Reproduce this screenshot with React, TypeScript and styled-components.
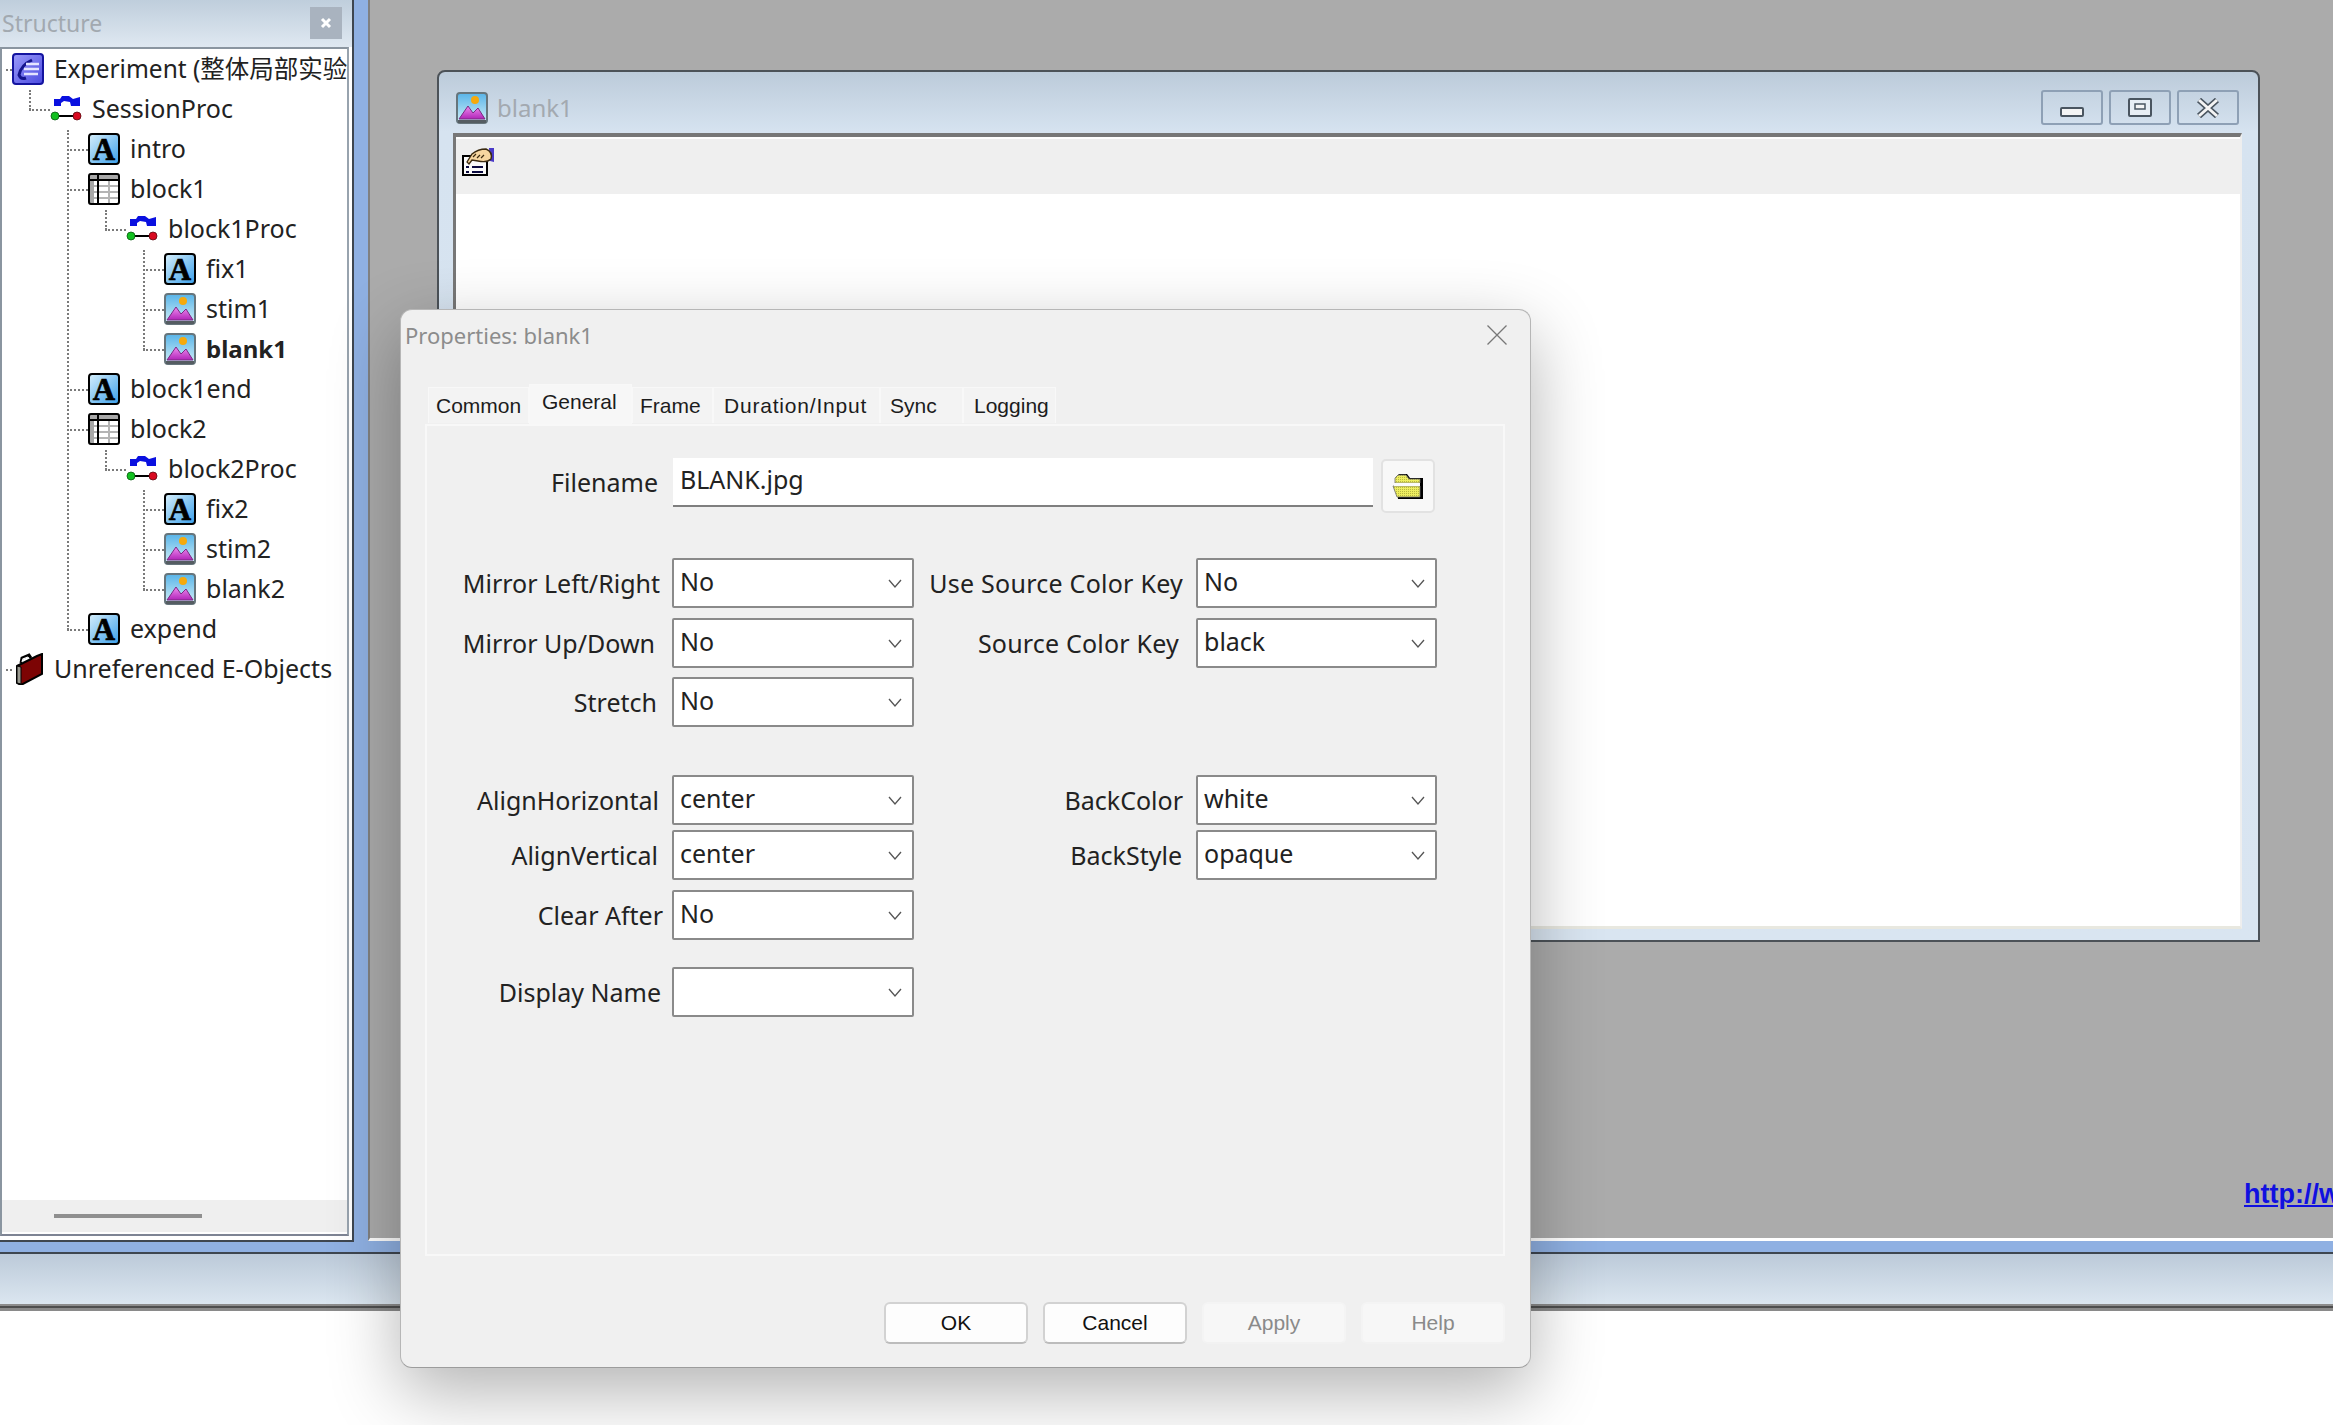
import React from "react";
import styled, { createGlobalStyle } from "styled-components";

const UI_FONT = `"Noto Sans", "Noto Sans CJK SC", sans-serif`;
const DIALOG_FONT = `"Liberation Sans", sans-serif`;

const GlobalStyle = createGlobalStyle`
  html, body {
    margin: 0;
    padding: 0;
    background: #fff;
    overflow: hidden;
  }
  * { box-sizing: border-box; }
`;

/* ---------- icons ---------- */

const TextIcon = () => (
  <svg width="32" height="32" viewBox="0 0 32 32" overflow="visible">
    <defs>
      <linearGradient id="textBg" x1="0" y1="0" x2="1" y2="1">
        <stop offset="0" stopColor="#d8f0fc" />
        <stop offset="1" stopColor="#3a9fea" />
      </linearGradient>
    </defs>
    <rect x="1" y="1" width="30" height="30" rx="3" fill="url(#textBg)" stroke="#000" strokeWidth="2" />
    <text
      x="16"
      y="26.5"
      textAnchor="middle"
      fontFamily="Liberation Serif"
      fontWeight="700"
      fontSize="31"
      fill="#000"
      stroke="#000"
      strokeWidth="0.7"
    >
      A
    </text>
  </svg>
);

const ImageIcon = () => (
  <svg width="32" height="32" viewBox="0 0 32 32">
    <defs>
      <linearGradient id="skyBg" x1="0" y1="0" x2="0" y2="1">
        <stop offset="0" stopColor="#58b4e8" />
        <stop offset="1" stopColor="#d4f0f8" />
      </linearGradient>
      <linearGradient id="hillBg" x1="0" y1="0" x2="0" y2="1">
        <stop offset="0" stopColor="#f08cf0" />
        <stop offset="1" stopColor="#b024b8" />
      </linearGradient>
    </defs>
    <rect x="1" y="1" width="30" height="30" rx="3" fill="url(#skyBg)" stroke="#66757c" strokeWidth="2" />
    <circle cx="19" cy="8" r="4" fill="#f6a90c" />
    <polygon points="3,27 12,14 17,21 22,16 29,27" fill="url(#hillBg)" stroke="#7a2a80" strokeWidth="1" />
    <rect x="2" y="28" width="28" height="3" fill="#555d62" />
  </svg>
);

const ProcIcon = () => (
  <svg width="32" height="32" viewBox="0 0 32 32">
    <polygon
      points="4,13 4,6 10,6 12,3 19,3 23,6 30,4 30,13 21,13 20,9 14,8 11,10 11,13"
      fill="#0a10e0"
    />
    <line x1="5" y1="23" x2="27" y2="23" stroke="#000" strokeWidth="2" />
    <circle cx="5" cy="23" r="4" fill="#12c020" stroke="#0a5a10" strokeWidth="0.8" />
    <circle cx="27" cy="23" r="4" fill="#d80a20" stroke="#5a0a10" strokeWidth="0.8" />
  </svg>
);

const ListIcon = () => (
  <svg width="32" height="32" viewBox="0 0 32 32">
    <rect x="1" y="1" width="30" height="30" rx="2" fill="#fff" />
    <rect x="1" y="1" width="30" height="6" fill="#a8a8a8" />
    <rect x="1" y="1" width="5" height="30" fill="#a8a8a8" />
    <path d="M6 13 H31 M6 19 H31 M6 25 H31 M21 7 V31" stroke="#b4b4b4" strokeWidth="2" />
    <path d="M10 2 V30 M1 7 H31" stroke="#000" strokeWidth="2" />
    <rect x="1" y="1" width="30" height="30" rx="2" fill="none" stroke="#000" strokeWidth="2" />
  </svg>
);

const ExperimentIcon = () => (
  <svg width="32" height="32" viewBox="0 0 32 32">
    <defs>
      <linearGradient id="expBg" x1="0" y1="0" x2="1" y2="1">
        <stop offset="0" stopColor="#9c9cfa" />
        <stop offset="1" stopColor="#4a4ae0" />
      </linearGradient>
    </defs>
    <rect x="1" y="1" width="30" height="30" rx="3" fill="url(#expBg)" stroke="#1414a0" strokeWidth="2" />
    <path d="M20 7 Q9 12 7 22 Q9 27 14 25" fill="none" stroke="#14148c" strokeWidth="3" />
    <path d="M14 11 H27 M12 16 H27 M12 21 H26" stroke="#e4e4ff" strokeWidth="2.4" />
  </svg>
);

const CaseIcon = () => (
  <svg width="32" height="32" viewBox="0 0 32 32">
    <polygon points="5,13 25,3 30,1 30,21 9,32 5,30" fill="#7c0404" stroke="#000" strokeWidth="2" />
    <polygon points="5,13 9,14 9,31 5,30" fill="#9a9a90" stroke="#000" strokeWidth="1" />
    <path d="M9 10 L10 5 L17 2 L19 5" fill="none" stroke="#000" strokeWidth="3" />
    <path d="M10 9 L11 6 L16 4" fill="none" stroke="#fff" strokeWidth="1.2" />
  </svg>
);

const FolderIcon = () => (
  <svg width="32" height="27" viewBox="0 0 32 27">
    <defs>
      <pattern id="dither" width="2" height="2" patternUnits="userSpaceOnUse">
        <rect width="2" height="2" fill="#eeee60" />
        <rect width="1" height="1" fill="#b8b840" />
      </pattern>
    </defs>
    <path d="M4 4 L7 1 H15 L18 5 H31 V26 H6 Z" fill="#000" />
    <path d="M3 5 L6 2 H14 L17 6 H28 V10 H3 Z" fill="url(#dither)" stroke="#6a6a6a" strokeWidth="0.8" />
    <path d="M1 13 H28 V24 H5 Z" fill="url(#dither)" stroke="#6a6a6a" strokeWidth="0.8" />
    <rect x="2" y="10" width="26" height="3" fill="#fafafa" />
  </svg>
);

const HandDocIcon = () => (
  <svg width="32" height="28" viewBox="0 0 32 28">
    <rect x="1" y="8" width="24" height="19" fill="#fafafa" stroke="#000" strokeWidth="2" />
    <path d="M4 19 H7 M10 19 H21 M4 24 H7 M10 24 H21" stroke="#0a0a40" strokeWidth="2" />
    <polygon points="27,0 32,0 32,14 28,13" fill="#4a3ac8" />
    <path d="M5 14 L10 6 Q16 1 24 1 Q31 4 29 11 Q25 15 16 13 L10 12 L7 16 Z" fill="#f6d6a0" stroke="#3a2a10" strokeWidth="1.4" />
    <path d="M11 9 L14 6 M15 10 L18 7 M19 10 L22 7" stroke="#3a2a10" strokeWidth="1.2" />
  </svg>
);

const ChevronSvg = styled.svg`
  flex: none;
  margin-top: 4px;
`;

const Chevron = () => (
  <ChevronSvg width="14" height="9" viewBox="0 0 14 9">
    <path d="M1 1 L7 8 L13 1" fill="none" stroke="#555" strokeWidth="1.3" />
  </ChevronSvg>
);

/* ---------- page shell ---------- */

const Page = styled.div`
  position: relative;
  width: 100%;
  height: 1425px;
  overflow: hidden;
  background: #fff;
  font-family: ${UI_FONT};
`;

const MainArea = styled.div`
  display: flex;
  align-items: flex-start;
  height: 1254px;
  background: #8fb0e2;
  border-bottom: 2px solid #3e4650;
`;

const StatusBar = styled.div`
  height: 50px;
  background: linear-gradient(to bottom, #bccad9, #dbe6f0);
`;

const StatusRule = styled.div`
  height: 7px;
  background: linear-gradient(to bottom, #8c8c8c 0 2px, #4e4e4e 2px 4px, #8a8a8a 4px 7px);
`;

/* ---------- structure dock ---------- */

const Dock = styled.aside`
  flex: none;
  display: flex;
  flex-direction: column;
  width: 354px;
  height: 1242px;
  background: #fff;
  border-right: 2px solid #3e4650;
  border-bottom: 2px solid #3e4650;
`;

const DockTitle = styled.div`
  flex: none;
  display: flex;
  align-items: center;
  justify-content: space-between;
  height: 47px;
  padding: 0 10px 2px 2px;
  background: linear-gradient(to bottom, #bfcedc, #dfe8f1);
  color: #a2a9b0;
  font-size: 23px;
`;

const DockClose = styled.div`
  display: flex;
  align-items: center;
  justify-content: center;
  width: 32px;
  height: 32px;
  background: #a9b3bf;
`;

const TreeFrame = styled.div`
  display: flex;
  flex-direction: column;
  width: 349px;
  height: 1189px;
  border: 2px solid #8a95a0;
  border-right-color: #98a3ae;
  border-bottom-color: #7e8494;
  padding-bottom: 2px;
`;

const Tree = styled.div`
  flex: 1;
  overflow: hidden;
`;

const TreeRow = styled.div<{ $depth: number; $up: number }>`
  position: relative;
  display: flex;
  align-items: center;
  gap: 10px;
  height: 40px;
  padding-left: ${(p) => 10 + p.$depth * 38}px;
  white-space: nowrap;

  svg {
    flex: none;
  }

  &::before {
    content: "";
    position: absolute;
    top: 20px;
    left: ${(p) => (p.$depth === 0 ? 4 : p.$depth * 38 - 11)}px;
    width: ${(p) => (p.$depth === 0 ? 6 : 21)}px;
    border-top: 2px dotted #7a7a7a;
  }

  &::after {
    content: "";
    position: absolute;
    bottom: 19px;
    left: ${(p) => p.$depth * 38 - 11}px;
    height: ${(p) => p.$up}px;
    border-left: 2px dotted #7a7a7a;
  }
`;

const TreeLabel = styled.span<{ $bold?: boolean; $size?: number }>`
  color: #222;
  font-size: ${(p) => p.$size ?? 25}px;
  font-weight: ${(p) => (p.$bold ? 700 : 400)};
  line-height: 39px;
  margin-bottom: 1px;
`;

const ScrollTrack = styled.div`
  flex: none;
  display: flex;
  align-items: center;
  height: 32px;
  padding-left: 52px;
  background: #efefef;
`;

const ScrollThumb = styled.div`
  width: 148px;
  height: 4px;
  background: #8f8f8f;
`;

/* ---------- workspace and inner window ---------- */

const Workspace = styled.main`
  flex: none;
  width: 1965px;
  height: 1241px;
  margin-left: 14px;
  overflow: hidden;
  background: #ababab;
  border-left: 2px solid #808080;
  border-bottom: 3px solid #fff;
`;

const ChildWindow = styled.section`
  display: flex;
  flex-direction: column;
  width: 1823px;
  height: 872px;
  margin: 70px 0 0 67px;
  padding: 0 16px 11px 14px;
  background: linear-gradient(to bottom, #bccbda 0, #d6e3f0 60px, #d9e5f1 100%);
  border: 2px solid #4c5258;
  border-radius: 8px 8px 0 0;
`;

const WindowTitle = styled.header`
  flex: none;
  display: flex;
  align-items: center;
  gap: 9px;
  height: 61px;
  padding: 10px 0 0 3px;
  color: #a3a9b0;
  font-size: 24px;
`;

const WindowButtons = styled.div`
  display: flex;
  gap: 6px;
  margin-left: auto;
  margin-right: 3px;
`;

const WindowButton = styled.div`
  display: flex;
  align-items: center;
  justify-content: center;
  width: 62px;
  height: 35px;
  border: 2px solid #8ea0b5;
  border-radius: 3px;
`;

const ClientArea = styled.div`
  flex: 1;
  background: #fff;
  border-top: 4px solid #777;
  border-left: 3px solid #777;
  border-right: 2px solid #eee;
  border-bottom: 3px solid #e8e8e0;
`;

const ClientToolbar = styled.div`
  display: flex;
  align-items: flex-start;
  height: 57px;
  padding: 9px 0 0 6px;
  background: #efefef;
  border-top: 2px solid #fff;
`;

const SiteLink = styled.a`
  display: block;
  margin: 239px 0 0 1874px;
  color: #1010e0;
  font-family: ${DIALOG_FONT};
  font-size: 27px;
  font-weight: 700;
  line-height: 1;
  text-decoration: underline;
  white-space: nowrap;
`;

/* ---------- properties dialog ---------- */

const Dialog = styled.div`
  position: absolute;
  left: 400px;
  top: 309px;
  display: flex;
  flex-direction: column;
  width: 1131px;
  height: 1059px;
  padding: 0 25px 0 24px;
  background: #f0f0f0;
  border: 1.5px solid #b6b6b6;
  border-bottom-color: #9c9c9c;
  border-radius: 12px;
  box-shadow: 0 24px 70px rgba(0, 0, 0, 0.3);
`;

const DialogHead = styled.div`
  flex: none;
  display: flex;
  align-items: flex-start;
  justify-content: space-between;
  height: 74px;
  margin: 0 -25px 0 -24px;
  padding: 10px 23px 0 4px;
  color: #8c8c8c;
  font-size: 22px;
`;

const CloseGlyph = styled.div`
  margin-top: 1px;
`;

const TabStrip = styled.div`
  flex: none;
  display: flex;
  align-items: flex-end;
  height: 40px;
  padding-left: 3px;
  font-family: ${DIALOG_FONT};
  font-size: 21px;
  color: #1c1c1c;
`;

const Tab = styled.div<{ $active?: boolean; $width: number; $inset: number; $track?: number }>`
  display: flex;
  align-items: center;
  width: ${(p) => p.$width}px;
  height: ${(p) => (p.$active ? 40 : 36)}px;
  margin-bottom: ${(p) => (p.$active ? 0 : 1)}px;
  padding-left: ${(p) => p.$inset}px;
  padding-bottom: ${(p) => (p.$active ? 6 : 0)}px;
  background: ${(p) => (p.$active ? "#f7f7f7" : "#f3f3f3")};
  border: 1px solid #f8f8f8;
  border-bottom: 0;
  letter-spacing: ${(p) => p.$track ?? 0}px;
  white-space: nowrap;
`;

const TabPanel = styled.div`
  flex: none;
  height: 832px;
  padding-top: 32px;
  border: 2px solid #f8f8f8;
  font-size: 25px;
  color: #222;
`;

const FileRow = styled.div`
  display: grid;
  grid-template-columns: 246px 700px 62px;
  align-items: start;
  height: 55px;
`;

const FieldRow = styled.div<{ $top: number }>`
  display: grid;
  grid-template-columns: 245px 242px 282px 241px;
  align-items: center;
  height: 50px;
  margin-top: ${(p) => p.$top}px;
`;

const FieldLabel = styled.div<{ $nudge?: number; $track?: number }>`
  padding-right: ${(p) => p.$nudge ?? 14}px;
  letter-spacing: ${(p) => p.$track ?? 0}px;
  line-height: 48px;
  text-align: right;
  white-space: nowrap;
`;

const TextBox = styled.div`
  height: 49px;
  padding: 0 7px 6px;
  background: #fff;
  border-bottom: 2px solid #7f7f7f;
  line-height: 43px;
`;

const BrowseButton = styled.div`
  display: flex;
  align-items: center;
  justify-content: center;
  height: 54px;
  margin-top: 1px;
  margin-left: 8px;
  background: #f8f8f8;
  border: 2px solid #e2e2e2;
  border-radius: 5px;
`;

const SelectBox = styled.div`
  display: flex;
  align-items: center;
  justify-content: space-between;
  height: 50px;
  padding: 0 10px 4px 6px;
  background: #fff;
  border: 2px solid #8a8a8a;
  border-radius: 2px;
`;

const DialogFooter = styled.div`
  flex: 1;
  display: flex;
  justify-content: flex-end;
  gap: 15px;
  padding-top: 46px;
`;

const PushButton = styled.div<{ $disabled?: boolean }>`
  display: flex;
  align-items: center;
  justify-content: center;
  width: 144px;
  height: 42px;
  background: ${(p) => (p.$disabled ? "#f7f7f7" : "#fdfdfd")};
  border: 2px solid ${(p) => (p.$disabled ? "#f4f4f4" : "#d2d2d2")};
  border-bottom-color: ${(p) => (p.$disabled ? "#f2f2f2" : "#bcbcbc")};
  border-radius: 6px;
  color: ${(p) => (p.$disabled ? "#8a8a8a" : "#111")};
  font-family: ${DIALOG_FONT};
  font-size: 21px;
`;

/* ---------- data ---------- */

type TreeNode = {
  label: string;
  depth: number;
  up: number;
  icon: React.ReactNode;
  bold?: boolean;
  size?: number;
};

const treeNodes: TreeNode[] = [
  { label: "Experiment (整体局部实验", depth: 0, up: 0, icon: <ExperimentIcon />, size: 24.5 },
  { label: "SessionProc", depth: 1, up: 20, icon: <ProcIcon /> },
  { label: "intro", depth: 2, up: 0, icon: <TextIcon /> },
  { label: "block1", depth: 2, up: 0, icon: <ListIcon /> },
  { label: "block1Proc", depth: 3, up: 20, icon: <ProcIcon /> },
  { label: "fix1", depth: 4, up: 0, icon: <TextIcon /> },
  { label: "stim1", depth: 4, up: 0, icon: <ImageIcon /> },
  { label: "blank1", depth: 4, up: 100, icon: <ImageIcon />, bold: true, size: 24 },
  { label: "block1end", depth: 2, up: 0, icon: <TextIcon /> },
  { label: "block2", depth: 2, up: 0, icon: <ListIcon /> },
  { label: "block2Proc", depth: 3, up: 20, icon: <ProcIcon /> },
  { label: "fix2", depth: 4, up: 0, icon: <TextIcon /> },
  { label: "stim2", depth: 4, up: 0, icon: <ImageIcon /> },
  { label: "blank2", depth: 4, up: 100, icon: <ImageIcon /> },
  { label: "expend", depth: 2, up: 500, icon: <TextIcon /> },
  { label: "Unreferenced E-Objects", depth: 0, up: 0, icon: <CaseIcon /> },
];

const tabs = [
  { label: "Common", width: 101, inset: 7 },
  { label: "General", width: 103, inset: 12, active: true },
  { label: "Frame", width: 81, inset: 7 },
  { label: "Duration/Input", width: 167, inset: 10, track: 0.8 },
  { label: "Sync", width: 83, inset: 9 },
  { label: "Logging", width: 93, inset: 10 },
];

type Field = { label: string; value: string; nudge?: number; track?: number };
type FormRow = { top: number; left: Field; right?: Field };

const formRows: FormRow[] = [
  {
    top: 45,
    left: { label: "Mirror Left/Right", value: "No", nudge: 12 },
    right: { label: "Use Source Color Key", value: "No", nudge: 13, track: 0.25 },
  },
  {
    top: 10,
    left: { label: "Mirror Up/Down", value: "No", nudge: 17 },
    right: { label: "Source Color Key", value: "black", nudge: 17, track: 0.2 },
  },
  { top: 9, left: { label: "Stretch", value: "No", nudge: 15 } },
  {
    top: 48,
    left: { label: "AlignHorizontal", value: "center", nudge: 13 },
    right: { label: "BackColor", value: "white", nudge: 13 },
  },
  {
    top: 5,
    left: { label: "AlignVertical", value: "center", nudge: 14 },
    right: { label: "BackStyle", value: "opaque", nudge: 14 },
  },
  { top: 10, left: { label: "Clear After", value: "No", nudge: 9 } },
  { top: 27, left: { label: "Display Name", value: "", nudge: 11 } },
];

const Select = ({ value }: { value: string }) => (
  <SelectBox>
    <span>{value}</span>
    <Chevron />
  </SelectBox>
);

export default function App() {
  return (
    <Page>
      <GlobalStyle />
      <MainArea>
        <Dock>
          <DockTitle>
            Structure
            <DockClose>
              <svg width="12" height="12" viewBox="0 0 12 12">
                <path d="M2 2 L10 10 M10 2 L2 10" stroke="#fff" strokeWidth="3" />
              </svg>
            </DockClose>
          </DockTitle>
          <TreeFrame>
            <Tree>
              {treeNodes.map((node) => (
                <TreeRow key={node.label} $depth={node.depth} $up={node.up}>
                  {node.icon}
                  <TreeLabel $bold={node.bold} $size={node.size}>
                    {node.label}
                  </TreeLabel>
                </TreeRow>
              ))}
            </Tree>
            <ScrollTrack>
              <ScrollThumb />
            </ScrollTrack>
          </TreeFrame>
        </Dock>

        <Workspace>
          <ChildWindow>
            <WindowTitle>
              <ImageIcon />
              blank1
              <WindowButtons>
                <WindowButton>
                  <svg width="24" height="12" viewBox="0 0 24 12" style={{ marginTop: 8 }}>
                    <rect x="1" y="2" width="22" height="8" rx="1" fill="#f4f4f4" stroke="#4a5560" strokeWidth="2" />
                  </svg>
                </WindowButton>
                <WindowButton>
                  <svg width="24" height="20" viewBox="0 0 24 20">
                    <rect x="1" y="1" width="22" height="17" rx="1" fill="#e8eef4" stroke="#4a5560" strokeWidth="2" />
                    <rect x="7" y="6" width="10" height="5" fill="#f4f4f4" stroke="#4a5560" strokeWidth="1.5" />
                  </svg>
                </WindowButton>
                <WindowButton>
                  <svg width="24" height="20" viewBox="0 0 24 20">
                    <path d="M3 2 L21 18 M21 2 L3 18" stroke="#4a5560" strokeWidth="6" />
                    <path d="M3 2 L21 18 M21 2 L3 18" stroke="#f4f4f4" strokeWidth="3" />
                  </svg>
                </WindowButton>
              </WindowButtons>
            </WindowTitle>
            <ClientArea>
              <ClientToolbar>
                <HandDocIcon />
              </ClientToolbar>
            </ClientArea>
          </ChildWindow>
          <SiteLink>http://w</SiteLink>
        </Workspace>
      </MainArea>
      <StatusBar />
      <StatusRule />

      <Dialog>
        <DialogHead>
          Properties: blank1
          <CloseGlyph>
            <svg width="20" height="20" viewBox="0 0 20 20">
              <path d="M0.5 0.5 L19.5 19.5 M19.5 0.5 L0.5 19.5" stroke="#777" strokeWidth="1.3" />
            </svg>
          </CloseGlyph>
        </DialogHead>
        <TabStrip>
          {tabs.map((tab) => (
            <Tab key={tab.label} $active={tab.active} $width={tab.width} $inset={tab.inset} $track={tab.track}>
              {tab.label}
            </Tab>
          ))}
        </TabStrip>
        <TabPanel>
          <FileRow>
            <FieldLabel $nudge={15}>Filename</FieldLabel>
            <TextBox>BLANK.jpg</TextBox>
            <BrowseButton>
              <FolderIcon />
            </BrowseButton>
          </FileRow>
          {formRows.map((row) => (
            <FieldRow key={row.left.label} $top={row.top}>
              <FieldLabel $nudge={row.left.nudge} $track={row.left.track}>
                {row.left.label}
              </FieldLabel>
              <Select value={row.left.value} />
              {row.right && (
                <>
                  <FieldLabel $nudge={row.right.nudge} $track={row.right.track}>
                    {row.right.label}
                  </FieldLabel>
                  <Select value={row.right.value} />
                </>
              )}
            </FieldRow>
          ))}
        </TabPanel>
        <DialogFooter>
          <PushButton>OK</PushButton>
          <PushButton>Cancel</PushButton>
          <PushButton $disabled>Apply</PushButton>
          <PushButton $disabled>Help</PushButton>
        </DialogFooter>
      </Dialog>
    </Page>
  );
}
